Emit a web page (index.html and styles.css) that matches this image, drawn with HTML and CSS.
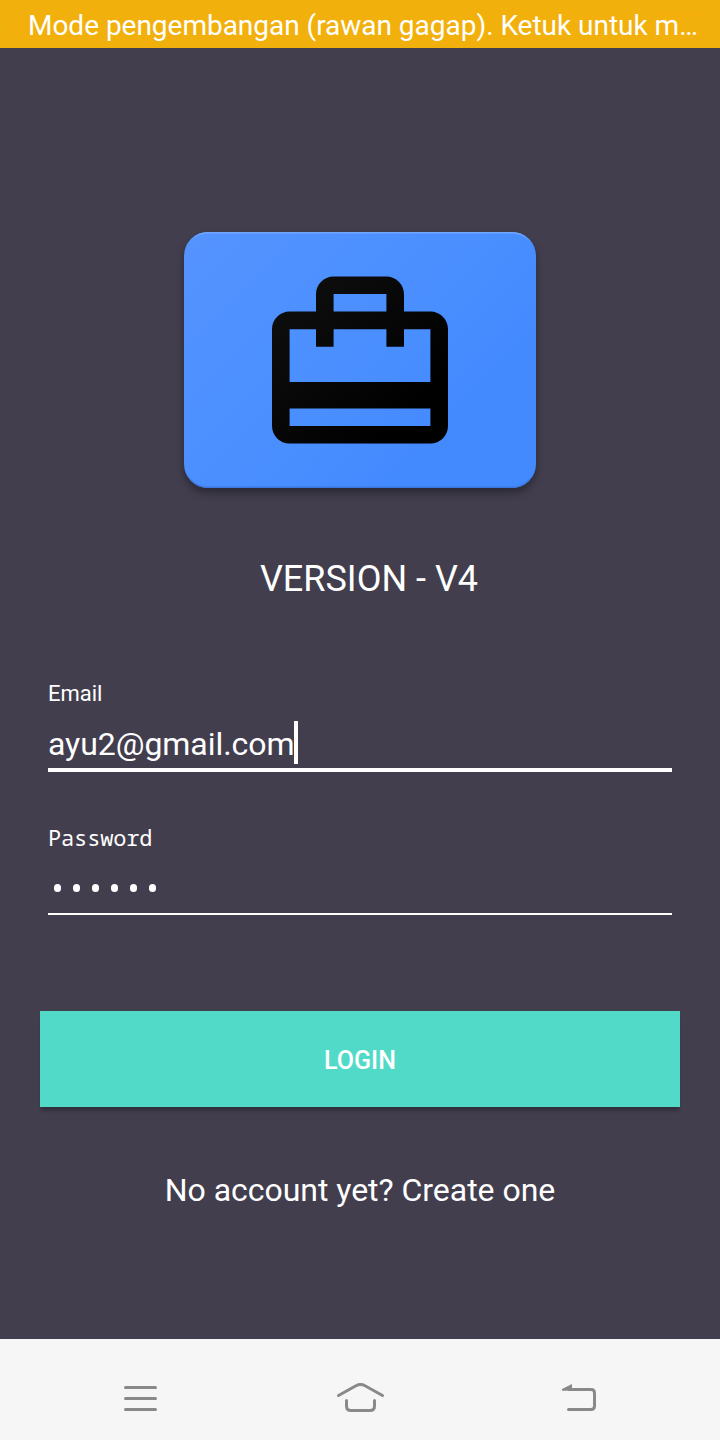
FILE: index.html
```html
<!DOCTYPE html>
<html lang="id">
<head>
<meta charset="utf-8">
<title>Login</title>
<link rel="stylesheet" href="styles.css">
</head>
<body>
<header class="notice">
  <svg class="status" width="720" height="48" viewBox="0 0 720 48" fill="none" stroke="#ffae0c" stroke-width="2">
    <path d="M23 19H13V34H23M13 26H22"/>
    <path d="M557 19q15-12 30 0M562 24q10-8 20 0"/>
    <rect x="659" y="14" width="45" height="19" rx="4"/>
    <path d="M707 20v7"/>
    <rect x="663" y="18" width="18" height="11" fill="#ffae0c" stroke="none"/>
  </svg>
  <p class="notice-text">Mode pengembangan (rawan gagap). Ketuk untuk m…</p>
</header>
<main class="screen">
  <svg class="logo" width="384" height="288" viewBox="0 0 384 288">
    <defs>
      <linearGradient id="sheen" gradientUnits="userSpaceOnUse" x1="16" y1="16" x2="250" y2="240">
        <stop offset="0" stop-color="#5694ff"/><stop offset=".3" stop-color="#4f91ff"/><stop offset=".75" stop-color="#498eff"/><stop offset="1" stop-color="#448aff"/>
      </linearGradient>
      <linearGradient id="ink" x1="0" y1="0" x2="1" y2="1">
        <stop offset="0" stop-color="#101010"/><stop offset=".8" stop-color="#000"/>
      </linearGradient>
      <linearGradient id="edge" x1="0" y1="0" x2="0" y2="1">
        <stop offset="0" stop-color="#72a6ff"/><stop offset=".06" stop-color="#448aff" stop-opacity="0"/><stop offset=".94" stop-color="#3977dc" stop-opacity="0"/><stop offset="1" stop-color="#3977dc"/>
      </linearGradient>
      <filter id="shade" x="-10%" y="-10%" width="120%" height="125%"><feGaussianBlur stdDeviation="4"/></filter>
    </defs>
    <rect x="16" y="21" width="352" height="256" rx="24" fill="#000" opacity=".34" filter="url(#shade)"/>
    <rect x="16" y="16" width="352" height="256" rx="24" fill="url(#sheen)"/>
    <rect x="16.7" y="16.7" width="350.6" height="254.6" rx="23.3" fill="none" stroke="url(#edge)" stroke-width="1.5"/>
    <path transform="translate(86.4 42.8) scale(8.8)" fill="url(#ink)" d="M20 6h-3V4c0-1.11-.89-2-2-2H9c-1.11 0-2 .89-2 2v2H4c-1.11 0-2 .89-2 2v11c0 1.11.89 2 2 2h16c1.11 0 2-.89 2-2V8c0-1.11-.89-2-2-2zM9 4h6v2H9V4zm11 15H4v-2h16v2zm0-5H4V8h3v2h2V8h6v2h2V8h3v6z"/>
  </svg>
  <h1 class="version">VERSION - V4</h1>
  <div class="field field-email">
    <label class="label">Email</label>
    <div class="value"><span>ayu2@gmail.com</span><i class="caret"></i></div>
  </div>
  <div class="field field-password">
    <label class="label label-mono">Password</label>
    <div class="dots"><i></i><i></i><i></i><i></i><i></i><i></i></div>
  </div>
  <button class="login">LOGIN</button>
  <p class="signup">No account yet? Create one</p>
</main>
<nav class="navbar">
  <svg width="60" height="60" viewBox="0 0 60 60"><path d="M15.5 17.5H45.5M15.5 28.5H45.5M15.5 39.5H45.5"/></svg>
  <svg width="60" height="60" viewBox="0 0 60 60"><path d="M8.5 25.5L26 15.7Q30.500 13.300 35 15.700L52.500 25.500M16.500 30.500V36Q16.500 40.500 21 40.500H40Q44.500 40.500 44.500 36V30.500"/></svg>
  <svg width="60" height="60" viewBox="0 0 60 60"><path d="M19 19.500H41Q44.500 19.500 44.500 23V36Q44.500 39.500 41 39.500H18.500"/><path class="tip" d="M12 20.800V19L22 14V20.800Z"/></svg>
</nav>
</body>
</html>
```
FILE: styles.css
```css
* { box-sizing: border-box; }
body {
  margin: 0;
  width: 720px;
  height: 1440px;
  display: flex;
  flex-direction: column;
  overflow: hidden;
  background: #423e4e;
  color: #fff;
  font-family: Roboto, "Liberation Sans", sans-serif;
}
h1, p { margin: 0; font-weight: 400; }
.notice {
  position: relative;
  height: 48px;
  padding: 0 0 0 28px;
  background: #f2b00c;
}
.status { position: absolute; left: 0; top: 0; opacity: .4; }
.notice-text {
  position: relative;
  font-size: 28px;
  line-height: 52px;
  height: 48px;
  letter-spacing: -.02px;
  white-space: nowrap;
}
.screen {
  height: 1291px;
  padding: 168px 40px 0;
  display: flex;
  flex-direction: column;
}
.logo { align-self: center; flex: none; }
.version {
  margin-top: 54px;
  padding-left: 18px;
  text-align: center;
  font-size: 36px;
  line-height: 42px;
}
.field {
  margin: 0 8px;
  display: flex;
  flex-direction: column;
}
.field-email { margin-top: 80px; height: 92px; border-bottom: 4px solid #fff; }
.field-password { margin-top: 52px; height: 91px; border-bottom: 2px solid #fff; }
.label { font-size: 22px; line-height: 28px; }
.label-mono {
  font-family: "Noto Sans Mono", "DejaVu Sans Mono", monospace;
  line-height: 26px;
  letter-spacing: -.15px;
}
.value {
  display: flex;
  margin-top: 13px;
  font-size: 32px;
  line-height: 46px;
  letter-spacing: -.05px;
}
.caret { width: 4px; height: 43px; background: #fff; }
.dots { display: flex; gap: 12px; padding: 34px 0 0 6px; }
.dots i { width: 7px; height: 8px; border-radius: 3.5px; background: #fff; }
.login {
  flex: none;
  margin: 96px 0 0;
  height: 96px;
  padding: 3px 0 0;
  border: 0;
  background: #52dac9;
  box-shadow: 0 5px 3px -1px rgba(0, 0, 0, .24);
  color: #fff;
  font: 500 25px/28px Roboto, sans-serif;
}
.signup {
  margin-top: 64px;
  text-align: center;
  font-size: 32px;
  line-height: 38px;
  letter-spacing: -.03px;
}
.navbar {
  height: 101px;
  padding: 31px 110px 0;
  display: flex;
  justify-content: space-between;
  background: #f6f6f6;
}
.navbar svg { fill: none; stroke: #898989; stroke-width: 3; stroke-linecap: round; }
.navbar .tip { fill: #898989; stroke: none; }
```
